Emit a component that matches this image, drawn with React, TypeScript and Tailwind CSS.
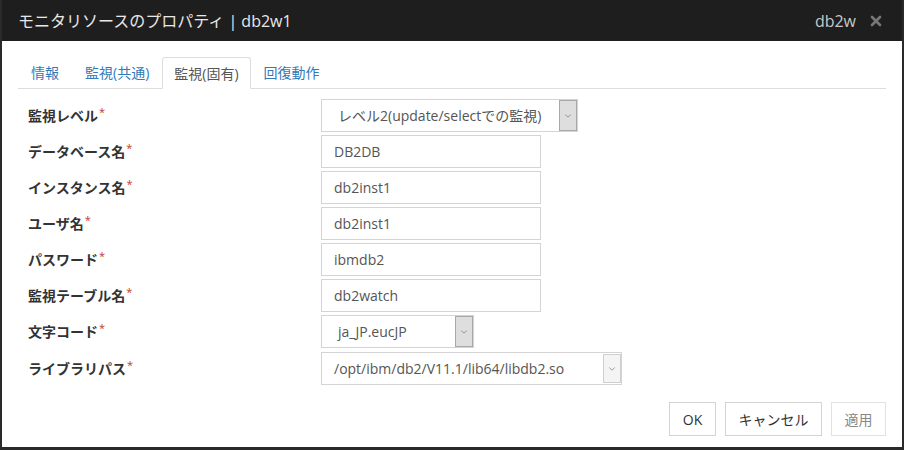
import { X, ChevronDown } from "lucide-react";

const font = { fontFamily: '"Open Sans", "Noto Sans CJK JP", sans-serif' };

interface Row {
  label: string;
  kind: "input" | "select";
  value: string;
  width: string;
  light?: boolean;
}

const rows: Row[] = [
  { label: "監視レベル", kind: "select", value: "レベル2(update/selectでの監視)", width: "w-[257px]" },
  { label: "データベース名", kind: "input", value: "DB2DB", width: "w-[220px]" },
  { label: "インスタンス名", kind: "input", value: "db2inst1", width: "w-[220px]" },
  { label: "ユーザ名", kind: "input", value: "db2inst1", width: "w-[220px]" },
  { label: "パスワード", kind: "input", value: "ibmdb2", width: "w-[220px]" },
  { label: "監視テーブル名", kind: "input", value: "db2watch", width: "w-[220px]" },
  { label: "文字コード", kind: "select", value: "ja_JP.eucJP", width: "w-[153px]" },
  { label: "ライブラリパス", kind: "select", value: "/opt/ibm/db2/V11.1/lib64/libdb2.so", width: "w-[301px]", light: true },
];

function Field({ row }: { row: Row }) {
  if (row.kind === "input") {
    return (
      <div className={`${row.width} h-[33px] border border-[#d4d4d4] bg-white flex items-center pl-[12px] text-[14px] text-[#555]`}>
        {row.value}
      </div>
    );
  }
  return (
    <div className={`${row.width} h-[33px] border border-[#d4d4d4] bg-white flex items-stretch text-[14px] text-[#555]`}>
      <div className={`flex-1 flex items-center ${row.light ? "pl-[12px]" : "pl-[16px]"}`}>{row.value}</div>
      <div
        className={`w-[18px] flex items-center justify-center ${
          row.light ? "border border-[#cfcfcf] bg-[#f4f4f4] my-[1px]" : "border border-[#a8a8a8] bg-[#dedede]"
        }`}
      >
        <ChevronDown className="w-[10px] h-[10px] text-[#666]" strokeWidth={1.5} />
      </div>
    </div>
  );
}

export default function App() {
  return (
    <div className="w-[904px] h-[450px] bg-white border-x-2 border-b-[3px] border-[#2a2a2a] flex flex-col" style={font}>
      {/* ヘッダー */}
      <div className="h-[41px] bg-[#1e1e1e] flex items-center justify-between pl-[16px] pr-[18px]">
        <div className="text-[16px] text-[#e8e8e8]">モニタリソースのプロパティ | db2w1</div>
        <div className="flex items-center gap-[12px]">
          <span className="text-[16px] text-[#c8c8c8]">db2w</span>
          <X className="w-[16px] h-[16px] text-[#777]" strokeWidth={4} />
        </div>
      </div>

      {/* タブ */}
      <div className="mx-[16px] mt-[16px] flex border-b border-[#ddd] h-[32px] text-[14px]">
        <div className="px-[13px] flex items-center text-[#337ab7]">情報</div>
        <div className="px-[13px] flex items-center text-[#337ab7]">監視(共通)</div>
        <div className="px-[11px] flex items-center text-[#555] border border-[#ddd] border-b-white bg-white rounded-t-[3px] mb-[-1px]">
          監視(固有)
        </div>
        <div className="px-[13px] flex items-center text-[#337ab7]">回復動作</div>
      </div>

      {/* フォーム */}
      <div className="flex flex-col gap-[3px] mt-[10px] pl-[26px]">
        {rows.map((row) => (
          <div key={row.label} className={`flex items-center ${row.light ? "h-[35px]" : "h-[33px]"}`}>
            <div className="w-[293px] text-[14px] font-bold text-[#333]">
              {row.label}
              <sup className="text-[#c0392b] text-[11px] font-normal ml-[1px]">*</sup>
            </div>
            <Field row={row} />
          </div>
        ))}
      </div>

      {/* ボタン */}
      <div className="flex justify-end gap-[9px] mt-[16px] pr-[16px] text-[14px]">
        <button className="w-[47px] h-[34px] border border-[#d4d4d4] bg-white text-[#333]">OK</button>
        <button className="w-[97px] h-[34px] border border-[#d4d4d4] bg-white text-[#333]">キャンセル</button>
        <button className="w-[55px] h-[34px] border border-[#e2e2e2] bg-white text-[#888]">適用</button>
      </div>
    </div>
  );
}
